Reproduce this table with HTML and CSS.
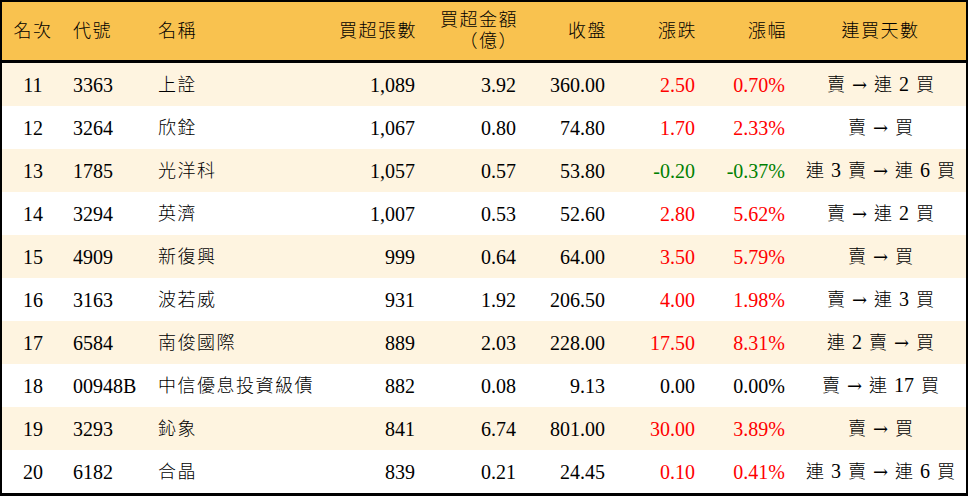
FILE: index.html
```html
<!DOCTYPE html>
<html lang="zh-Hant">
<head>
<meta charset="utf-8">
<title>買超排行</title>
<link rel="stylesheet" href="styles.css">
</head>
<body>
<table class="rank">
  <colgroup>
    <col class="c-rank"><col class="c-code"><col class="c-name"><col class="c-vol"><col class="c-amt"><col class="c-close"><col class="c-chg"><col class="c-pct"><col class="c-days">
  </colgroup>
  <thead>
    <tr>
      <th class="ctr">名次</th>
      <th class="lft">代號</th>
      <th class="lft">名稱</th>
      <th class="rgt">買超張數</th>
      <th class="rgt">買超金額<br>（億）</th>
      <th class="rgt">收盤</th>
      <th class="rgt">漲跌</th>
      <th class="rgt">漲幅</th>
      <th class="ctr">連買天數</th>
    </tr>
  </thead>
  <tbody>
    <tr><td class="ctr">11</td><td class="lft">3363</td><td class="lft name">上詮</td><td class="rgt">1,089</td><td class="rgt">3.92</td><td class="rgt">360.00</td><td class="rgt up">2.50</td><td class="rgt up">0.70%</td><td class="ctr days"><span class="cj">賣</span> <span class="arr">→</span> <span class="cj">連</span> 2 <span class="cj">買</span></td></tr>
    <tr><td class="ctr">12</td><td class="lft">3264</td><td class="lft name">欣銓</td><td class="rgt">1,067</td><td class="rgt">0.80</td><td class="rgt">74.80</td><td class="rgt up">1.70</td><td class="rgt up">2.33%</td><td class="ctr days"><span class="cj">賣</span> <span class="arr">→</span> <span class="cj">買</span></td></tr>
    <tr><td class="ctr">13</td><td class="lft">1785</td><td class="lft name">光洋科</td><td class="rgt">1,057</td><td class="rgt">0.57</td><td class="rgt">53.80</td><td class="rgt down">-0.20</td><td class="rgt down">-0.37%</td><td class="ctr days"><span class="cj">連</span> 3 <span class="cj">賣</span> <span class="arr">→</span> <span class="cj">連</span> 6 <span class="cj">買</span></td></tr>
    <tr><td class="ctr">14</td><td class="lft">3294</td><td class="lft name">英濟</td><td class="rgt">1,007</td><td class="rgt">0.53</td><td class="rgt">52.60</td><td class="rgt up">2.80</td><td class="rgt up">5.62%</td><td class="ctr days"><span class="cj">賣</span> <span class="arr">→</span> <span class="cj">連</span> 2 <span class="cj">買</span></td></tr>
    <tr><td class="ctr">15</td><td class="lft">4909</td><td class="lft name">新復興</td><td class="rgt">999</td><td class="rgt">0.64</td><td class="rgt">64.00</td><td class="rgt up">3.50</td><td class="rgt up">5.79%</td><td class="ctr days"><span class="cj">賣</span> <span class="arr">→</span> <span class="cj">買</span></td></tr>
    <tr><td class="ctr">16</td><td class="lft">3163</td><td class="lft name">波若威</td><td class="rgt">931</td><td class="rgt">1.92</td><td class="rgt">206.50</td><td class="rgt up">4.00</td><td class="rgt up">1.98%</td><td class="ctr days"><span class="cj">賣</span> <span class="arr">→</span> <span class="cj">連</span> 3 <span class="cj">買</span></td></tr>
    <tr><td class="ctr">17</td><td class="lft">6584</td><td class="lft name">南俊國際</td><td class="rgt">889</td><td class="rgt">2.03</td><td class="rgt">228.00</td><td class="rgt up">17.50</td><td class="rgt up">8.31%</td><td class="ctr days"><span class="cj">連</span> 2 <span class="cj">賣</span> <span class="arr">→</span> <span class="cj">買</span></td></tr>
    <tr><td class="ctr">18</td><td class="lft">00948B</td><td class="lft name">中信優息投資級債</td><td class="rgt">882</td><td class="rgt">0.08</td><td class="rgt">9.13</td><td class="rgt">0.00</td><td class="rgt">0.00%</td><td class="ctr days"><span class="cj">賣</span> <span class="arr">→</span> <span class="cj">連</span> 17 <span class="cj">買</span></td></tr>
    <tr><td class="ctr">19</td><td class="lft">3293</td><td class="lft name">鈊象</td><td class="rgt">841</td><td class="rgt">6.74</td><td class="rgt">801.00</td><td class="rgt up">30.00</td><td class="rgt up">3.89%</td><td class="ctr days"><span class="cj">賣</span> <span class="arr">→</span> <span class="cj">買</span></td></tr>
    <tr><td class="ctr">20</td><td class="lft">6182</td><td class="lft name">合晶</td><td class="rgt">839</td><td class="rgt">0.21</td><td class="rgt">24.45</td><td class="rgt up">0.10</td><td class="rgt up">0.41%</td><td class="ctr days"><span class="cj">連</span> 3 <span class="cj">賣</span> <span class="arr">→</span> <span class="cj">連</span> 6 <span class="cj">買</span></td></tr>
  </tbody>
</table>
</body>
</html>
```
FILE: styles.css
```css
html, body {
  margin: 0;
  padding: 0;
  background: #ffffff;
}

.rank {
  width: 968px;
  table-layout: fixed;
  border-collapse: separate;
  border-spacing: 0;
  border: 2px solid #000;
  border-bottom-width: 3px;
  font-family: "Liberation Serif", "Noto Sans CJK TC", serif;
  font-size: 20px;
  font-weight: 300;
  color: #000;
}

.c-rank { width: 62px; }
.c-code { width: 85px; }
.c-name { width: 181px; }
.c-vol { width: 95px; }
.c-amt { width: 101px; }
.c-close { width: 89px; }
.c-chg { width: 90px; }
.c-pct { width: 90px; }
.c-days { width: 171px; }

.rank th {
  background: #f9c24f;
  font-size: 18px;
  font-weight: 300;
  letter-spacing: 1.5px;
  height: 58px;
  line-height: 21px;
  padding: 0 8px 0 9px;
  border-bottom: 3px solid #000;
  white-space: nowrap;
}

.rank td {
  height: 43px;
  padding: 0 10px 0 9px;
  line-height: 22px;
  white-space: nowrap;
  box-sizing: border-box;
}

.rank tbody tr:nth-child(odd) td {
  background: #fef4e0;
}

.name {
  font-size: 18px;
  letter-spacing: 1.5px;
}

.days {
  word-spacing: 2px;
}

.cj {
  font-size: 18px;
}

.arr {
  font-family: "DejaVu Serif", serif;
  font-size: 18px;
}

.ctr { text-align: center; }
.lft { text-align: left; }
.rgt { text-align: right; }

.rank th.ctr, .rank td.ctr { padding-left: 0; padding-right: 0; }

.up { color: #ff0000; }
.down { color: #008000; }
```
